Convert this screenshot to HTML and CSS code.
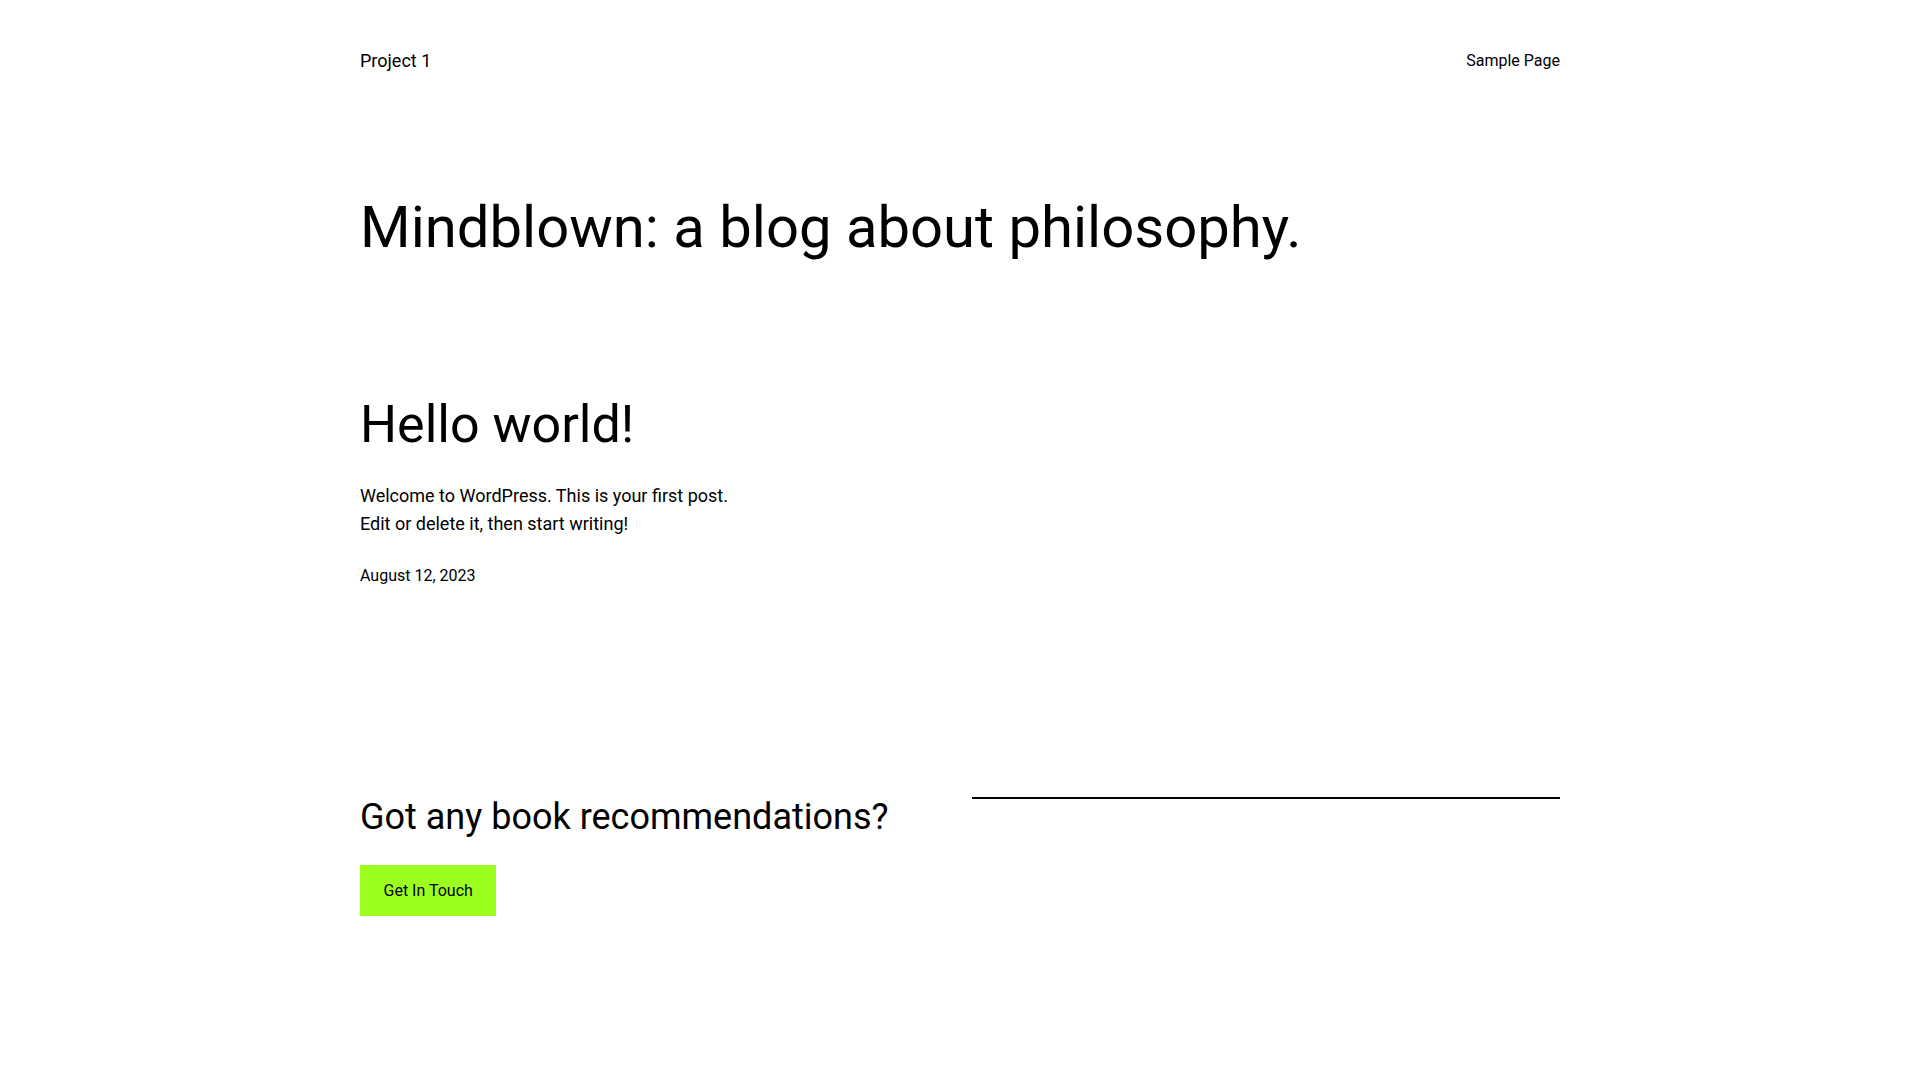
FILE: index.html
```html
<!DOCTYPE html>
<html lang="en">
<head>
<meta charset="utf-8">
<title>Project 1</title>
<link rel="stylesheet" href="styles.css">
</head>
<body>
<div class="page">
  <header class="site-header">
    <a class="site-title" href="#">Project 1</a>
    <nav class="site-nav"><a href="#">Sample Page</a></nav>
  </header>
  <main>
    <h1 class="blog-title">Mindblown: a blog about philosophy.</h1>
    <div class="posts">
      <article class="post">
        <h2 class="post-title">Hello world!</h2>
        <p class="post-excerpt">Welcome to WordPress. This is your first post. Edit or delete it, then start writing!</p>
        <div class="post-date">August 12, 2023</div>
      </article>
    </div>
    <section class="cta">
      <div class="cta-left">
        <h2 class="cta-title">Got any book recommendations?</h2>
        <a class="button" href="#">Get In Touch</a>
      </div>
      <div class="cta-right">
        <hr class="separator">
      </div>
    </section>
  </main>
</div>
</body>
</html>
```
FILE: styles.css
```css
html, body {
  margin: 0;
  padding: 0;
  background: #ffffff;
}
body {
  font-family: Roboto, "Liberation Sans", sans-serif;
  color: #000000;
}
a {
  color: inherit;
  text-decoration: none;
}
.page {
  width: 1200px;
  margin: 0 auto;
}
.site-header {
  display: flex;
  justify-content: space-between;
  align-items: center;
  padding-top: 50px;
}
.site-title {
  font-size: 18px;
  line-height: 1.2;
}
.site-nav {
  font-size: 16px;
  line-height: 1.2;
}
.blog-title {
  margin: 121px 0 0;
  font-size: 58px;
  font-weight: 400;
  line-height: 1.2;
}
.posts {
  display: grid;
  grid-template-columns: repeat(3, 1fr);
  gap: 30px;
  margin-top: 132px;
}
.post-title {
  margin: 0;
  font-size: 52px;
  font-weight: 400;
  line-height: 1.2;
}
.post-excerpt {
  margin: 25px 0 0;
  font-size: 18px;
  line-height: 28px;
}
.post-date {
  margin-top: 26px;
  font-size: 16px;
  line-height: 24px;
}
.cta {
  display: grid;
  grid-template-columns: 1fr 1fr;
  gap: 24px;
  align-items: start;
  margin-top: 208px;
}
.cta-title {
  margin: 0;
  font-size: 36px;
  font-weight: 400;
  line-height: 1.2;
}
.button {
  display: inline-block;
  margin-top: 26px;
  padding: 16px 23.5px;
  background: #9dff20;
  font-size: 16px;
  line-height: 19px;
}
.separator {
  margin: 1px 0 0;
  border: 0;
  border-top: 2px solid #000000;
  height: 0;
}
```
